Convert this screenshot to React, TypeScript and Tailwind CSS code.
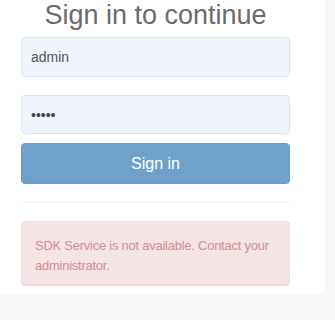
import React from 'react';

export default function App() {
  return (
    <div className="min-h-[320px] w-[335px] bg-[#f8f8f8]" style={{ fontFamily: '"Liberation Sans", Arial, sans-serif' }}>
      <div className="w-[325px] h-[294px] bg-white rounded-br-[5px] pl-[21px] pr-[35px] overflow-hidden">
        <h1 className="text-[27px] leading-[28px] text-[#6b6b6b] text-center pt-[1px] h-[37px]">Sign in to continue</h1>
        <form className="flex flex-col">
          <input
            type="text"
            defaultValue="admin"
            className="h-[40px] w-full rounded-[4px] border border-[#dfe4eb] bg-[#eef3fc] px-[9px] text-[14px] text-[#555] outline-none"
          />
          <input
            type="password"
            defaultValue="admin"
            className="mt-[18px] h-[39px] w-full rounded-[4px] border border-[#dfe4eb] bg-[#eef3fc] px-[9px] text-[14px] text-[#444] outline-none"
          />
          <button
            type="button"
            className="mt-[9px] h-[41px] w-full rounded-[4px] border border-[#6a9bc6] bg-[#6fa1cb] text-[16px] text-white"
          >
            Sign in
          </button>
        </form>
        <div className="mt-[18px] border-t border-[#f1f1f1]" />
        <div className="mt-[18px] h-[65px] rounded-[4px] border border-[#f1d8da] bg-[#f5e4e5] pl-[13px] pr-[4px] pt-[14px] text-[13px] leading-[20px] tracking-[-0.25px] text-[#d08f8f]">
          SDK Service is not available. Contact your administrator.
        </div>
      </div>
    </div>
  );
}
